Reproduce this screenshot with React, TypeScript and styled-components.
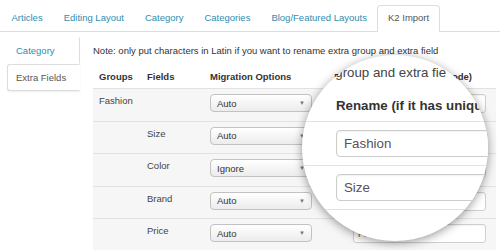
import styled, { createGlobalStyle } from "styled-components";

const teal = "#2f8db0";
const columns = "48px 63px 143px 149px";

const GlobalStyle = createGlobalStyle`
  html, body {
    margin: 0;
    padding: 0;
    background: #fff;
  }
  body {
    font-family: "Liberation Sans", Arial, sans-serif;
    font-size: 9.5px;
    color: #333;
  }
`;

const Page = styled.div`
  position: relative;
  width: 500px;
  height: 250px;
  overflow: hidden;
`;

/* top tabs */
const TabBar = styled.ul`
  display: flex;
  align-items: flex-end;
  height: 26px;
  margin: 0;
  padding: 5px 0 0 1px;
  list-style: none;
  border-bottom: 1px solid #ddd;
`;

const Tab = styled.li<{ $active?: boolean }>`
  height: ${(p) => (p.$active ? "27px" : "26px")};
  box-sizing: border-box;
  margin-bottom: ${(p) => (p.$active ? "-1px" : "0")};
  padding: 0 9.5px;
  line-height: 24px;
  border: 1px solid ${(p) => (p.$active ? "#ddd" : "transparent")};
  border-bottom: 0;
  border-radius: 4px 4px 0 0;
  background: #fff;
  color: ${(p) => (p.$active ? "#555" : teal)};
  white-space: nowrap;
`;

const Body = styled.div`
  display: flex;
`;

/* left vertical tabs */
const SideNav = styled.ul`
  display: flex;
  flex-direction: column;
  width: 80px;
  box-sizing: border-box;
  margin: 0;
  padding: 5px 0 0 7px;
  list-style: none;
`;

const SideTab = styled.li<{ $active?: boolean }>`
  height: 27px;
  box-sizing: border-box;
  padding-left: 8px;
  line-height: 25px;
  border: 1px solid ${(p) => (p.$active ? "#ddd" : "transparent")};
  border-right-color: ${(p) => (p.$active ? "transparent" : "#ddd")};
  border-radius: 3px 0 0 3px;
  background: #fff;
  color: ${(p) => (p.$active ? "#555" : teal)};
  box-shadow: ${(p) => (p.$active ? "0 1px 2px rgba(0,0,0,0.07)" : "none")};
`;

const Main = styled.div`
  width: 403px;
  margin-left: 13px;
`;

const Note = styled.p`
  margin: 0;
  padding-top: 13px;
  line-height: 12px;
  white-space: nowrap;
`;

const HeaderRow = styled.div`
  display: grid;
  grid-template-columns: ${columns};
  align-items: center;
  height: 22px;
  box-sizing: border-box;
  margin-top: 9px;
  padding-bottom: 1px;
  font-weight: bold;
  color: #333;
`;

const HeadCell = styled.div<{ $end?: boolean }>`
  display: flex;
  justify-content: ${(p) => (p.$end ? "flex-end" : "flex-start")};
  padding-left: 6px;
  padding-right: ${(p) => (p.$end ? "24px" : "0")};
  white-space: nowrap;
`;

const BodyRow = styled.div`
  display: grid;
  grid-template-columns: ${columns};
  align-items: start;
  height: 32.5px;
  box-sizing: border-box;
  padding-top: 5px;
  border-top: 1px solid #e2e2e2;
  background: #f6f6f6;
`;

const Label = styled.div`
  padding-left: 6px;
  line-height: 13px;
  color: #444;
  white-space: nowrap;
`;

const SelectBox = styled.div`
  display: flex;
  align-items: center;
  justify-content: space-between;
  width: 102px;
  height: 18px;
  box-sizing: border-box;
  margin-left: 6px;
  padding: 0 6px;
  border: 1px solid #c2c2c2;
  border-radius: 4px;
  background: linear-gradient(#ffffff, #ececec);
  color: #333;
`;

const Caret = styled.span`
  font-size: 6px;
  color: #777;
`;

const TextBox = styled.div`
  display: flex;
  align-items: center;
  width: 133px;
  height: 19px;
  box-sizing: border-box;
  margin-left: 6px;
  padding-left: 4px;
  border: 1px solid #cfcfcf;
  border-radius: 3px;
  background: #fff;
  box-shadow: inset 0 1px 1px rgba(0, 0, 0, 0.05);
  font-size: 9px;
  color: #555;
`;

/* magnifier */
const Lens = styled.div`
  position: absolute;
  left: 302px;
  top: 55px;
  width: 186px;
  height: 186px;
  border-radius: 50%;
  overflow: hidden;
  background: #fff;
  box-shadow: 0 2px 10px rgba(0, 0, 0, 0.4);
  font-size: 13.3px;
  white-space: nowrap;
`;

const LensNote = styled.div`
  display: flex;
  align-items: center;
  height: 34px;
  color: #444;
`;

const LensHeader = styled.div`
  display: flex;
  align-items: center;
  height: 32px;
  padding-left: 34px;
  font-weight: bold;
  color: #333;
`;

const LensRow = styled.div`
  padding: 8px 0 8px 34px;
  border-top: 1px solid #e3e3e3;

  &:last-child {
    border-bottom: 1px solid #e3e3e3;
  }
`;

const LensInput = styled.div`
  display: flex;
  align-items: center;
  width: 200px;
  height: 27px;
  box-sizing: border-box;
  padding-left: 7px;
  border: 1px solid #ccc;
  border-radius: 4px;
  background: #fff;
  box-shadow: inset 0 1px 2px rgba(0, 0, 0, 0.06);
  color: #555;
`;

type Row = { group: string; field: string; option: string; name: string };

const rows: Row[] = [
  { group: "Fashion", field: "", option: "Auto", name: "Fashion" },
  { group: "", field: "Size", option: "Auto", name: "Size" },
  { group: "", field: "Color", option: "Ignore", name: "Color" },
  { group: "", field: "Brand", option: "Auto", name: "Brand" },
  { group: "", field: "Price", option: "Auto", name: "Price" },
];

const tabs = ["Articles", "Editing Layout", "Category", "Categories", "Blog/Featured Layouts", "K2 Import"];

export default function App() {
  return (
    <Page>
      <GlobalStyle />
      <TabBar>
        {tabs.map((t) => (
          <Tab key={t} $active={t === "K2 Import"}>
            {t}
          </Tab>
        ))}
      </TabBar>
      <Body>
        <SideNav>
          <SideTab>Category</SideTab>
          <SideTab $active>Extra Fields</SideTab>
        </SideNav>
        <Main>
          <Note>Note: only put characters in Latin if you want to rename extra group and extra field</Note>
          <HeaderRow>
            <HeadCell>Groups</HeadCell>
            <HeadCell>Fields</HeadCell>
            <HeadCell>Migration Options</HeadCell>
            <HeadCell $end>Rename (if it has unique code)</HeadCell>
          </HeaderRow>
          {rows.map((r) => (
            <BodyRow key={r.name}>
              <Label>{r.group}</Label>
              <Label>{r.field}</Label>
              <SelectBox>
                {r.option}
                <Caret>▼</Caret>
              </SelectBox>
              <TextBox>{r.name}</TextBox>
            </BodyRow>
          ))}
        </Main>
      </Body>
      <Lens>
        <LensNote>extra group and extra fie</LensNote>
        <LensHeader>Rename (if it has unique code)</LensHeader>
        <LensRow>
          <LensInput>Fashion</LensInput>
        </LensRow>
        <LensRow>
          <LensInput>Size</LensInput>
        </LensRow>
      </Lens>
    </Page>
  );
}
